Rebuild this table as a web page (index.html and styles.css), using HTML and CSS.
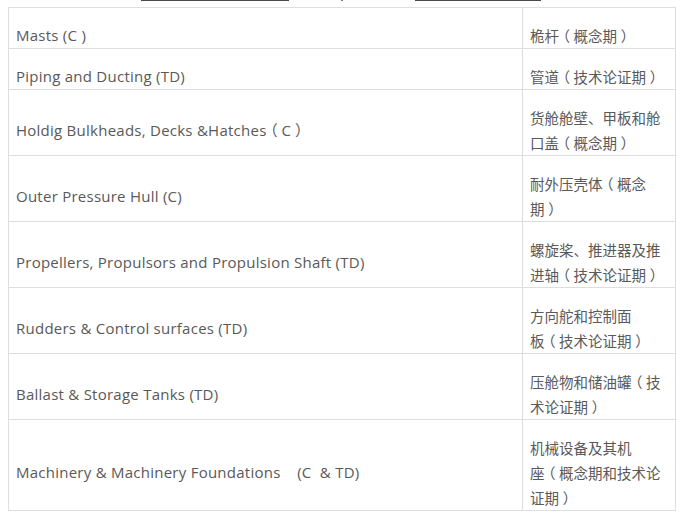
FILE: index.html
```html
<!DOCTYPE html>
<html lang="zh-CN">
<head>
<meta charset="utf-8">
<title>Table</title>
<link rel="stylesheet" href="styles.css">
</head>
<body>
<div class="cutoff">
  <span class="bar bar-a"></span>
  <span class="mark"></span>
  <span class="bar bar-b"></span>
</div>
<table class="spec">
  <tr class="r1"><td class="en">Masts (C )</td><td class="zh">桅杆<span class="pn">（</span>概念期<span class="pn">）</span></td></tr>
  <tr class="r1"><td class="en">Piping and Ducting (TD)</td><td class="zh">管道<span class="pn">（</span>技术论证期<span class="pn">）</span></td></tr>
  <tr><td class="en">Holdig Bulkheads, Decks &amp;Hatches<span class="pn">（</span>C<span class="pn">）</span></td><td class="zh">货舱舱壁、甲板和舱<br>口盖<span class="pn">（</span>概念期<span class="pn">）</span></td></tr>
  <tr><td class="en">Outer Pressure Hull (C)</td><td class="zh">耐外压壳体<span class="pn">（</span>概念<br>期<span class="pn">）</span></td></tr>
  <tr><td class="en">Propellers, Propulsors and Propulsion Shaft (TD)</td><td class="zh">螺旋桨、推进器及推<br>进轴<span class="pn">（</span>技术论证期<span class="pn">）</span></td></tr>
  <tr><td class="en">Rudders &amp; Control surfaces (TD)</td><td class="zh">方向舵和控制面<br>板<span class="pn">（</span>技术论证期<span class="pn">）</span></td></tr>
  <tr><td class="en">Ballast &amp; Storage Tanks (TD)</td><td class="zh">压舱物和储油罐<span class="pn">（</span>技<br>术论证期<span class="pn">）</span></td></tr>
  <tr><td class="en">Machinery &amp; Machinery Foundations &nbsp;&nbsp;&nbsp;(C &nbsp;&amp; TD)</td><td class="zh">机械设备及其机<br>座<span class="pn">（</span>概念期和技术论<br>证期<span class="pn">）</span></td></tr>
</table>
</body>
</html>
```
FILE: styles.css
```css
html, body {
  margin: 0;
  padding: 0;
  background: #ffffff;
}

.cutoff {
  display: flex;
  height: 1px;
  padding-left: 141px;
}

.bar {
  display: block;
  height: 1px;
  background: #4a4a4a;
}

.bar-a { width: 148px; }

.mark {
  display: block;
  width: 2px;
  height: 1px;
  margin-left: 52px;
  background: #777;
}

.bar-b {
  width: 126px;
  margin-left: 72px;
}

.spec {
  margin: 6px 0 0 8px;
  border-collapse: collapse;
  table-layout: fixed;
  width: 668px;
  color: #595959;
  font-family: "Open Sans", "Noto Sans CJK SC", sans-serif;
  font-size: 15px;
  letter-spacing: 0.25px;
}

.spec td {
  border: 1px solid #dedede;
  padding: 15px 7px 0 7px;
  line-height: 25px;
  vertical-align: middle;
}

.spec td.en {
  width: 499px;
  white-space: nowrap;
}

.spec td.zh {
  width: 138px;
  white-space: nowrap;
  font-family: "Noto Sans CJK SC", sans-serif;
  font-size: 14.5px;
  letter-spacing: 0;
}

.pn {
  font-family: "Noto Sans CJK SC", sans-serif;
  font-feature-settings: "halt" 1;
  padding: 0 0.25em;
  letter-spacing: 0;
}

.r1 td {
  height: 25px;
}
```
